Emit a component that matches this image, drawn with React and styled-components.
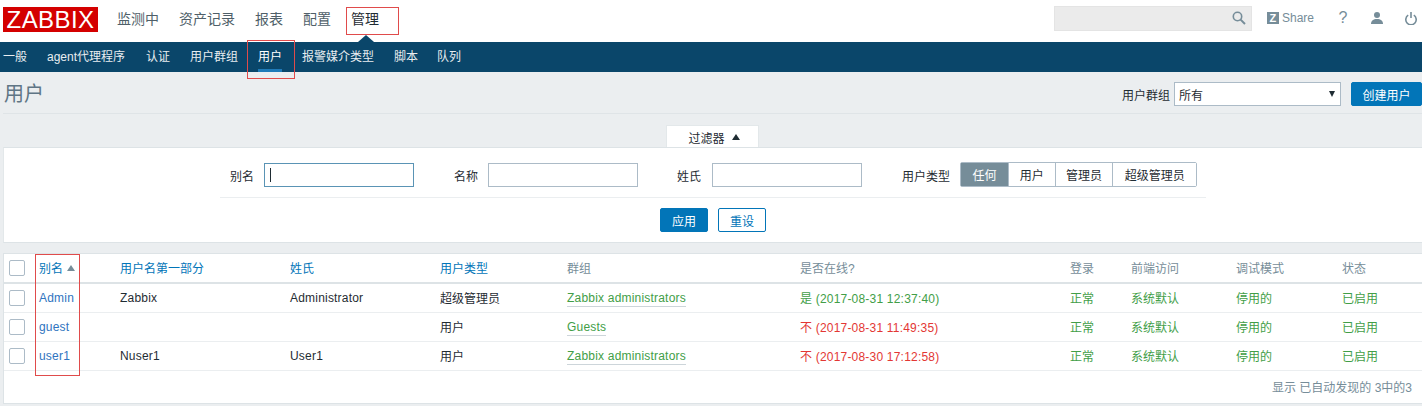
import React from 'react';
import styled, { createGlobalStyle } from 'styled-components';

const Global = createGlobalStyle`
  html, body { margin: 0; padding: 0; background: #ebeef0; }
  body { width: 1422px; height: 406px; overflow: hidden; font-family: "Liberation Sans", "Noto Sans CJK SC", Arial, sans-serif; font-size: 12px; color: #1f2c33; }
  * { box-sizing: border-box; }
`;

const Page = styled.div`position: relative; width: 1422px; height: 406px; overflow: hidden;`;
const Header = styled.header`height: 42px; background: #fff; display: flex; align-items: center; padding: 0 5px 0 3px;`;
const Logo = styled.div`
  width: 95px; height: 25px; background: #d40000; color: #fff; display: flex; align-items: center; justify-content: center;
  font-size: 24px; line-height: 25px; letter-spacing: 0.4px; white-space: nowrap; margin-top: -3px;
`;
const MainNav = styled.nav`display: flex; gap: 20px; margin-left: 19px; font-size: 14px; position: relative; top: -3px;`;
const MainItem = styled.span`color: ${p => (p.$active ? '#1f2c33' : '#4f5f69')};`;
const Arrow = styled.span`
  position: absolute; left: 358px; top: 35px; width: 0; height: 0;
  border-left: 8px solid transparent; border-right: 8px solid transparent; border-bottom: 7px solid #0a466a;
`;
const Tools = styled.div`margin-left: auto; display: flex; align-items: center; position: relative; top: -3px; color: #768d99;`;
const Search = styled.div`
  width: 198px; height: 25px; background: #ebebeb; border: 1px solid #e4e4e4; display: flex; align-items: center; justify-content: flex-end; padding-right: 5px; margin-right: 15px;
`;
const Share = styled.div`display: flex; align-items: center; gap: 3px; font-size: 12px; color: #768d99; margin-right: 24px;`;
const ZBadge = styled.span`
  width: 12px; height: 12px; background: #768d99; color: #fff; font-size: 11px; font-weight: 700; line-height: 12px; text-align: center; display: block;
`;
const Help = styled.span`font-size: 16px; font-weight: 400; width: 10px; text-align: center; margin-right: 23px; color: #768d99;`;
const IconSlot = styled.span`display: flex; margin-right: ${p => p.$gap || 0}px;`;

const SubNav = styled.nav`height: 30px; background: #0a466a; display: flex; gap: 20px; padding-left: 3px; font-size: 12px;`;
const SubItem = styled.span`
  height: 30px; line-height: 31px; min-width: ${p => p.$w || 0}px; margin-left: ${p => p.$ml || 0}px; white-space: nowrap;
  border-bottom: 3px solid ${p => (p.$active ? '#1f7ab8' : 'transparent')}; color: ${p => (p.$active ? '#fff' : '#e8edf0')};
`;

const Content = styled.main`padding-left: 3px;`;
const TitleBar = styled.div`
  height: 42px; border-bottom: 1px solid #dfe4e7; display: flex; align-items: flex-start; justify-content: space-between; padding-top: 10px;
`;
const Title = styled.h1`margin: 0 0 0 1px; font-size: 20px; line-height: 24px; font-weight: 400; color: #5f7585;`;
const TitleControls = styled.div`display: flex; align-items: center;`;
const ControlLabel = styled.span`margin-right: 4px;`;
const SelectBox = styled.div`
  width: 167px; height: 24px; background: #fff; border: 1px solid #acbbc7; display: flex; align-items: center; justify-content: space-between; padding: 0 5px 0 4px; margin-right: 10px;
`;
const Caret = styled.span`width: 0; height: 0; border-left: 3.5px solid transparent; border-right: 3.5px solid transparent; border-top: 6px solid #1f2c33;`;
const Button = styled.button`
  height: 24px; width: ${p => p.$w}px; padding: 0; font: inherit; border-radius: 2px; border: 1px solid #0275b8; cursor: pointer;
  background: ${p => (p.$ghost ? '#fff' : '#0275b8')}; color: ${p => (p.$ghost ? '#0275b8' : '#fff')};
`;

const TabRow = styled.div`display: flex; justify-content: center; padding-top: 11px; padding-left: 3px; margin-left: -7px;`;
const FilterTab = styled.div`
  width: 93px; height: 23px; background: #fff; border: 1px solid #e3e8ea; border-bottom: 0; display: flex; align-items: center; justify-content: center; gap: 7px; padding-left: 3px; position: relative; margin-left: 4px;
`;
const UpTriangle = styled.span`
  display: block; width: 0; height: 0; border-left: 4px solid transparent; border-right: 4px solid transparent; border-bottom: ${p => p.$h || 6}px solid ${p => p.$c || '#1f2c33'};
`;
const FilterPanel = styled.section`height: 96px; background: #fff; border-top: 1px solid #dde3e6; border-bottom: 1px solid #dde3e6; border-left: 1px solid #e3e8ea; margin-top: -1px; position: relative;`;
const FilterRow = styled.div`
  display: grid; grid-template-columns: 226px 34px 150px 40px 34px 150px 39px 35px 150px 40px 58px 237px;
  grid-auto-rows: 24px; align-content: start; align-items: center; height: 49px; padding-top: 15px;
`;
const FilterCell = styled.div`grid-column: ${p => p.$c}; display: flex; align-items: center;`;
const FilterLabel = styled(FilterCell)`white-space: nowrap;`;
const TextInput = styled.div`
  width: 150px; height: 24px; background: #fff; border: 1px solid ${p => (p.$focus ? '#5a94b5' : '#acbbc7')}; display: flex; align-items: center; padding-left: 5px;
`;
const Cursor = styled.span`width: 1px; height: 14px; background: #1f2c33;`;
const Segments = styled.div`display: flex; height: 25px; border: 1px solid #acbbc7; border-radius: 2px; margin-top: -1px; width: 237px;`;
const Segment = styled.span`
  width: ${p => p.$w}px; display: flex; align-items: center; justify-content: center; border-left: ${p => (p.$first ? 0 : '1px solid #acbbc7')};
  background: ${p => (p.$on ? '#768d99' : '#fff')}; color: ${p => (p.$on ? '#fff' : '#1f2c33')};
`;
const Divider = styled.div`height: 1px; width: 986px; margin-left: 216px; background: #ebeef0;`;
const FilterActions = styled.div`display: flex; justify-content: flex-start; gap: 10px; margin-left: 656px; margin-top: 10px;`;

const TablePanel = styled.section`margin-top: 10px; height: 151px; background: #fff; border: 1px solid #dde3e6; border-right: 0; display: flex; flex-direction: column;`;
const Table = styled.table`width: 1418px; table-layout: fixed; border-collapse: separate; border-spacing: 0;`;
const Th = styled.th`
  height: 30px; padding: 0 0 1px 5px; text-align: left; font-weight: 400; border-bottom: 2px solid #dde3e6; color: ${p => (p.$link ? '#0275b8' : '#768d99')}; white-space: nowrap;
`;
const Td = styled.td`
  height: 29px; padding: 0 0 1px 5px; border-bottom: 1px solid #ebeef0; white-space: nowrap; color: ${p => p.$color || '#1f2c33'};
  letter-spacing: ${p => (p.$latin ? '0.2px' : 0)};
`;
const Box = styled.span`display: block; width: 16px; height: 16px; border: 1px solid #acbbc7; border-radius: 2px; background: #fff;`;
const BoxCell = styled.span`display: block; margin-top: 1px;`;
const SortHead = styled.span`display: inline-flex; align-items: center; gap: 4px;`;
const NameLink = styled.span`color: #2f74c0;`;
const GroupLink = styled.span`color: #429e47; border-bottom: 1px solid #cdd5da; padding-bottom: 1px;`;
const Footer = styled.div`height: 32px; padding: 0 10px 0 0; display: flex; align-items: center; justify-content: flex-end; color: #768d99; margin-top: -1px;`;

const Mark = styled.div`
  position: absolute; z-index: 10; left: ${p => p.$x}px; top: ${p => p.$y}px; width: ${p => p.$w}px; height: ${p => p.$h}px; border: 1px solid #e04b4b; pointer-events: none;
`;

const cols = [30, 81, 170, 150, 127, 233, 270, 61, 105, 106, 85];
const G = '#429e47';
const R = '#e33734';
const rows = [
  ['Admin', 'Zabbix', 'Administrator', '超级管理员', 'Zabbix administrators', '是 (2017-08-31 12:37:40)', G],
  ['guest', '', '', '用户', 'Guests', '不 (2017-08-31 11:49:35)', R],
  ['user1', 'Nuser1', 'User1', '用户', 'Zabbix administrators', '不 (2017-08-30 17:12:58)', R],
];

export default function App() {
  return (
    <Page>
      <Global />
      <Header>
        <Logo>ZABBIX</Logo>
        <MainNav>
          <MainItem>监测中</MainItem>
          <MainItem>资产记录</MainItem>
          <MainItem>报表</MainItem>
          <MainItem>配置</MainItem>
          <MainItem $active>管理</MainItem>
        </MainNav>
        <Tools>
          <Search>
            <svg width="14" height="14" viewBox="0 0 14 14" fill="none" stroke="#768d99" strokeWidth="1.6">
              <circle cx="5.5" cy="5.5" r="4.2" />
              <path d="M8.6 8.6 13 13" strokeWidth="2" />
            </svg>
          </Search>
          <Share><ZBadge>Z</ZBadge>Share</Share>
          <Help>?</Help>
          <IconSlot $gap={22}>
            <svg width="12" height="12" viewBox="0 0 12 12" fill="#768d99">
              <circle cx="6" cy="3" r="3" />
              <path d="M0 12c0-3.4 2.4-5 6-5s6 1.6 6 5z" />
            </svg>
          </IconSlot>
          <IconSlot>
            <svg width="12" height="13" viewBox="0 0 12 13" fill="none" stroke="#768d99" strokeWidth="1.6">
              <path d="M3.2 3.2a5.2 5.2 0 1 0 5.6 0" />
              <path d="M6 0v6" />
            </svg>
          </IconSlot>
        </Tools>
      </Header>
      <Arrow />
      <SubNav>
        <SubItem>一般</SubItem>
        <SubItem $w={79}>agent代理程序</SubItem>
        <SubItem>认证</SubItem>
        <SubItem>用户群组</SubItem>
        <SubItem $active>用户</SubItem>
        <SubItem>报警媒介类型</SubItem>
        <SubItem>脚本</SubItem>
        <SubItem $ml={-1}>队列</SubItem>
      </SubNav>
      <Content>
        <TitleBar>
          <Title>用户</Title>
          <TitleControls>
            <ControlLabel>用户群组</ControlLabel>
            <SelectBox>所有<Caret /></SelectBox>
            <Button $w={71}>创建用户</Button>
          </TitleControls>
        </TitleBar>
        <TabRow>
          <FilterTab>过滤器 <UpTriangle /></FilterTab>
        </TabRow>
        <FilterPanel>
          <FilterRow>
            <FilterLabel $c={2}>别名</FilterLabel>
            <FilterCell $c={3}><TextInput $focus><Cursor /></TextInput></FilterCell>
            <FilterLabel $c={5}>名称</FilterLabel>
            <FilterCell $c={6}><TextInput /></FilterCell>
            <FilterLabel $c={8}>姓氏</FilterLabel>
            <FilterCell $c={9}><TextInput /></FilterCell>
            <FilterLabel $c={11}>用户类型</FilterLabel>
            <FilterCell $c={12}>
              <Segments>
                <Segment $on $first $w={47}>任何</Segment>
                <Segment $w={47}>用户</Segment>
                <Segment $w={58}>管理员</Segment>
                <Segment $w={84}>超级管理员</Segment>
              </Segments>
            </FilterCell>
          </FilterRow>
          <Divider />
          <FilterActions>
            <Button $w={48}>应用</Button>
            <Button $ghost $w={48}>重设</Button>
          </FilterActions>
        </FilterPanel>
        <TablePanel>
          <Table>
            <colgroup>{cols.map((w, i) => <col key={i} style={{ width: w }} />)}</colgroup>
            <thead>
              <tr>
                <Th><Box /></Th>
                <Th $link><SortHead>别名<UpTriangle $c="#768d99" /></SortHead></Th>
                <Th $link>用户名第一部分</Th>
                <Th $link>姓氏</Th>
                <Th $link>用户类型</Th>
                <Th>群组</Th>
                <Th>是否在线?</Th>
                <Th>登录</Th>
                <Th>前端访问</Th>
                <Th>调试模式</Th>
                <Th>状态</Th>
              </tr>
            </thead>
            <tbody>
              {rows.map(r => (
                <tr key={r[0]}>
                  <Td><BoxCell><Box /></BoxCell></Td>
                  <Td $latin><NameLink>{r[0]}</NameLink></Td>
                  <Td $latin>{r[1]}</Td>
                  <Td $latin>{r[2]}</Td>
                  <Td>{r[3]}</Td>
                  <Td $latin><GroupLink>{r[4]}</GroupLink></Td>
                  <Td $latin $color={r[6]}>{r[5]}</Td>
                  <Td $color={G}>正常</Td>
                  <Td $color={G}>系统默认</Td>
                  <Td $color={G}>停用的</Td>
                  <Td $color={G}>已启用</Td>
                </tr>
              ))}
            </tbody>
          </Table>
          <Footer>显示 已自动发现的 3中的3</Footer>
        </TablePanel>
      </Content>
      <Mark $x={346} $y={7} $w={53} $h={28} />
      <Mark $x={247} $y={40} $w={48} $h={39} />
      <Mark $x={35} $y={254} $w={45} $h={122} />
    </Page>
  );
}
